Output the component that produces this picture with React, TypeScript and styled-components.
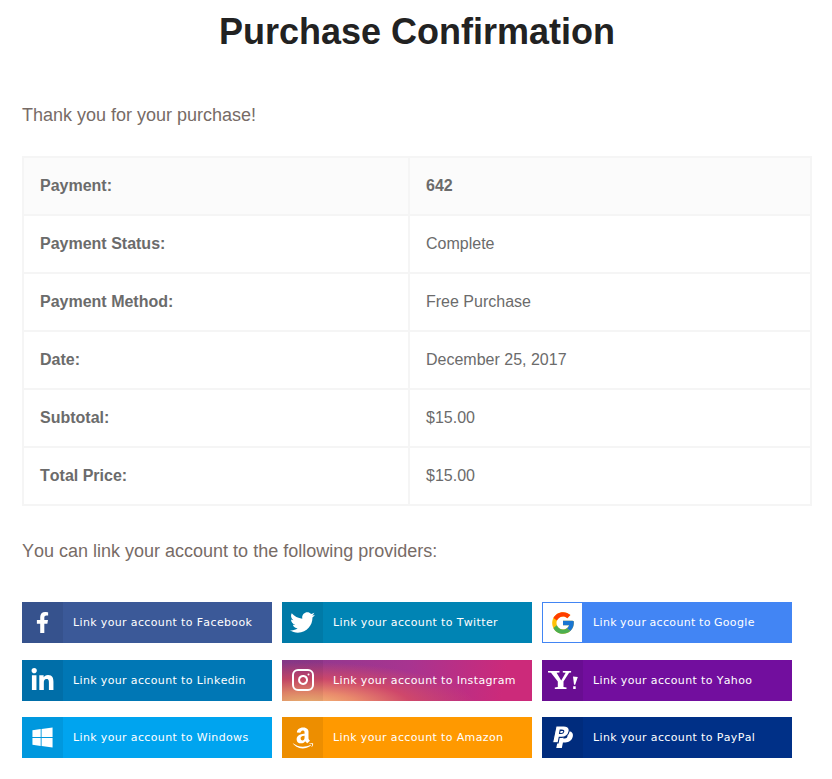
import React from 'react'
import styled, { createGlobalStyle } from 'styled-components'
import { FaFacebookF, FaTwitter, FaLinkedinIn, FaWindows, FaAmazon } from 'react-icons/fa'
import { FiInstagram } from 'react-icons/fi'
import { FcGoogle } from 'react-icons/fc'

const GlobalStyle = createGlobalStyle`
    html, body {
        margin: 0;
        padding: 0;
        background: #fff;
    }
    body {
        font-family: "Liberation Sans", Arial, sans-serif;
        font-kerning: none;
        color: #6b6461;
    }
`;

const Page = styled.div`
    width: 832px;
    box-sizing: border-box;
    padding: 0 20px 0 22px;
`;

const Title = styled.h1`
    margin: 0;
    padding-top: 11px;
    height: 78px;
    box-sizing: border-box;
    text-align: center;
    font-size: 36px;
    line-height: 42px;
    font-weight: 700;
    color: #222;
`;

const Lead = styled.p<{ $before: number; $after: number }>`
    margin: 0 0 ${p => p.$after}px;
    padding-top: ${p => p.$before}px;
    font-size: 18px;
    line-height: 27px;
    color: #776b66;
`;

const Table = styled.table`
    width: 790px;
    border-collapse: collapse;
    table-layout: fixed;
    border: 2px solid #f5f5f5;
    margin-bottom: 18px;
`;

const Row = styled.tr<{ $shaded?: boolean }>`
    height: 58px;
    background: ${p => (p.$shaded ? '#fbfbfb' : '#fff')};
`;

const Label = styled.th`
    width: 386px;
    box-sizing: border-box;
    padding: 0 16px;
    border: 2px solid #f5f5f5;
    text-align: left;
    font-size: 16px;
    font-weight: 700;
    color: #6b6b6b;
`;

const Value = styled.td<{ $bold?: boolean }>`
    padding: 0 16px;
    border: 2px solid #f5f5f5;
    font-size: 16px;
    font-weight: ${p => (p.$bold ? 700 : 400)};
    color: #6b6b6b;
`;

const Providers = styled.div`
    display: grid;
    grid-template-columns: repeat(3, 250px);
    column-gap: 10px;
    row-gap: 16.5px;
    margin-top: 37px;
`;

const Provider = styled.a<{ $bg: string }>`
    display: flex;
    align-items: center;
    height: 41px;
    background: ${p => p.$bg};
    color: #fff;
    text-decoration: none;
    font-family: "DejaVu Sans", Verdana, sans-serif;
    font-size: 11px;
    letter-spacing: 0.36px;
`;

const IconBox = styled.span<{ $bg: string; $size: number; $outline?: string }>`
    flex: 0 0 41px;
    height: 41px;
    box-sizing: border-box;
    display: flex;
    align-items: center;
    justify-content: center;
    background: ${p => p.$bg};
    font-size: ${p => p.$size}px;
    border: ${p => (p.$outline ? `1px solid ${p.$outline}` : 'none')};
`;

const ProviderText = styled.span<{ $tight?: boolean }>`
    padding-left: 10px;
    white-space: nowrap;
    word-spacing: ${p => (p.$tight ? '-0.7px' : '0')};
`;

const YahooIcon = () => (
    <svg width="30" height="19" viewBox="0 0 30 19" fill="#fff">
        <path d="M0 0h11.5v1.4L8.6 1.8l4.6 7.6 4.5-7.6-2.9-.4V0h8.3v1.4l-2 .3-5.6 8.8v5.4l3 .5V18H6.8v-1.5l3-.5v-5.4L3 1.8 0 1.4z" />
        <path d="M25 5.5l4.8.6-2.6 7.6h-1.2zM25.2 15.3h2.5V18h-2.5z" />
    </svg>
);

const paypalP =
    'M4.6 0h7c3.6 0 5.6 1.9 4.9 5-.7 3.4-3.3 5.4-6.8 5.4H7.5l-1 5H1.4zM8.4 3.6l-.6 3.3h1.4c1.3 0 2.2-.7 2.4-1.8.2-1-.4-1.5-1.6-1.5z';

const PaypalIcon = () => (
    <svg width="23" height="23" viewBox="0 0 21 21" fill="#fff" fillRule="evenodd">
        <path d={paypalP} transform="translate(3.4 4.6)" />
        <path d={paypalP} stroke="#002a78" strokeWidth="1" />
    </svg>
);

const shade = 'rgba(0,0,0,.07)';
const instagram =
    'radial-gradient(ellipse 170px 44px at 24px 46px, #f6c478 0%, #e98a6c 32%, rgba(214,75,100,.85) 62%, rgba(208,50,110,0) 100%), linear-gradient(100deg, #8b3a8e 0%, #a83490 50%, #cc2a7a 88%)';

const providers = [
    { name: 'Facebook', bg: '#3b5998', box: shade, size: 21, icon: <FaFacebookF /> },
    { name: 'Twitter', bg: '#0084b4', box: shade, size: 25, icon: <FaTwitter /> },
    { name: 'Google', bg: '#4285f4', box: '#fff', size: 26, outline: '#4285f4', tight: true, icon: <FcGoogle /> },
    { name: 'Linkedin', bg: '#0077b5', box: shade, size: 25, icon: <FaLinkedinIn /> },
    { name: 'Instagram', bg: instagram, box: 'rgba(0,0,0,.05)', size: 24, icon: <FiInstagram /> },
    { name: 'Yahoo', bg: '#720e9e', box: shade, size: 26, icon: <YahooIcon /> },
    { name: 'Windows', bg: '#00a4ef', box: shade, size: 23, icon: <FaWindows /> },
    { name: 'Amazon', bg: '#ff9900', box: shade, size: 24, icon: <FaAmazon /> },
    { name: 'PayPal', bg: '#003087', box: shade, size: 23, icon: <PaypalIcon /> },
];

const rows = [
    ['Payment:', '642'],
    ['Payment Status:', 'Complete'],
    ['Payment Method:', 'Free Purchase'],
    ['Date:', 'December 25, 2017'],
    ['Subtotal:', '$15.00'],
    ['Total Price:', '$15.00'],
];

export default function App() {
    return (
        <Page>
            <GlobalStyle />
            <Title>Purchase Confirmation</Title>
            <Lead $before={24} $after={27}>Thank you for your purchase!</Lead>
            <Table>
                <tbody>
                    {rows.map(([label, value], i) => (
                        <Row key={label} $shaded={i === 0}>
                            <Label>{label}</Label>
                            <Value $bold={i === 0}>{value}</Value>
                        </Row>
                    ))}
                </tbody>
            </Table>
            <Lead $before={14} $after={0}>You can link your account to the following providers:</Lead>
            <Providers>
                {providers.map(p => (
                    <Provider key={p.name} href="#" $bg={p.bg}>
                        <IconBox $bg={p.box} $size={p.size} $outline={p.outline}>{p.icon}</IconBox>
                        <ProviderText $tight={p.tight}>Link your account to {p.name}</ProviderText>
                    </Provider>
                ))}
            </Providers>
        </Page>
    )
}
